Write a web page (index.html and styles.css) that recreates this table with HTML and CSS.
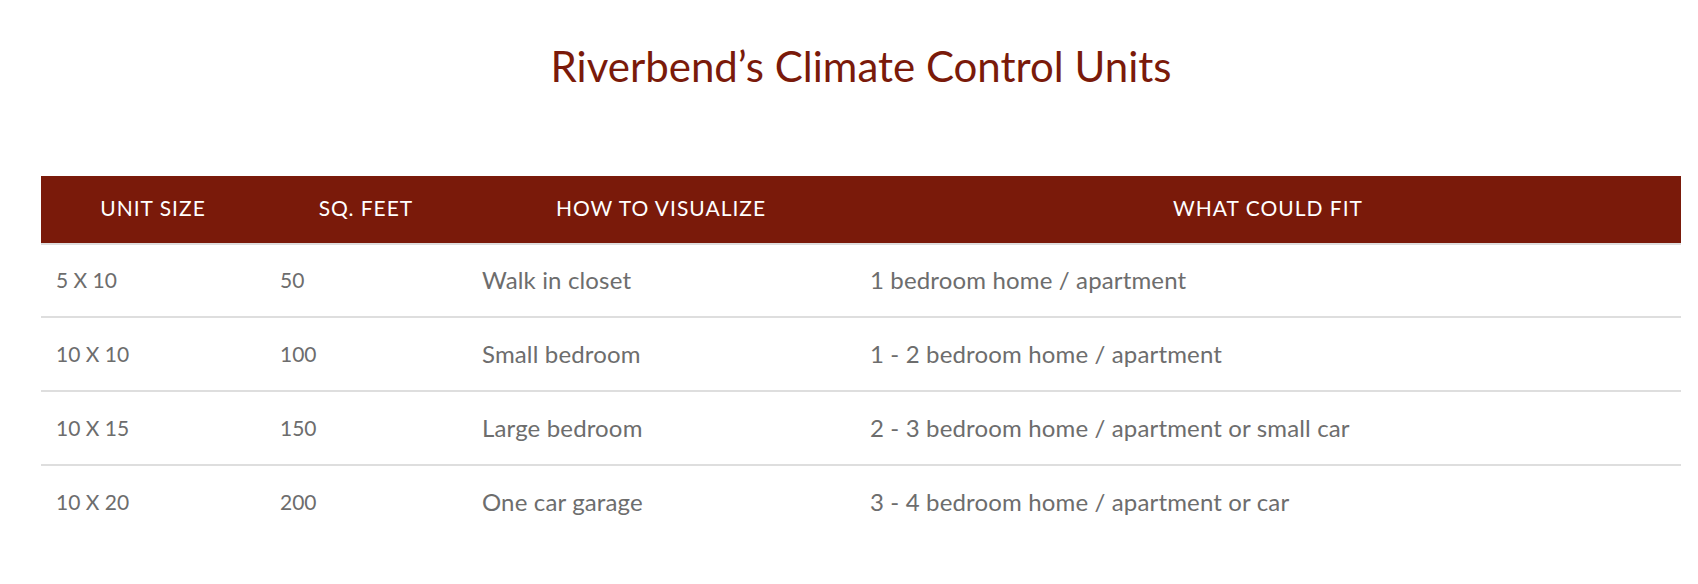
FILE: index.html
```html
<!DOCTYPE html>
<html lang="en">
<head>
<meta charset="utf-8">
<title>Riverbend's Climate Control Units</title>
<link rel="stylesheet" href="styles.css">
</head>
<body>
<div class="page">
  <h1 class="title">Riverbend’s Climate Control Units</h1>
  <table class="units">
    <colgroup>
      <col class="c1"><col class="c2"><col class="c3"><col class="c4">
    </colgroup>
    <thead>
      <tr>
        <th>UNIT SIZE</th>
        <th>SQ. FEET</th>
        <th>HOW TO VISUALIZE</th>
        <th>WHAT COULD FIT</th>
      </tr>
    </thead>
    <tbody>
      <tr>
        <td class="num">5 x 10</td>
        <td class="num">50</td>
        <td>Walk in closet</td>
        <td>1 bedroom home / apartment</td>
      </tr>
      <tr>
        <td class="num">10 x 10</td>
        <td class="num">100</td>
        <td>Small bedroom</td>
        <td>1 - 2 bedroom home / apartment</td>
      </tr>
      <tr>
        <td class="num">10 x 15</td>
        <td class="num">150</td>
        <td>Large bedroom</td>
        <td>2 - 3 bedroom home / apartment or small car</td>
      </tr>
      <tr>
        <td class="num">10 x 20</td>
        <td class="num">200</td>
        <td>One car garage</td>
        <td>3 - 4 bedroom home / apartment or car</td>
      </tr>
    </tbody>
  </table>
</div>
</body>
</html>
```

FILE: styles.css
```css
html, body {
  margin: 0;
  padding: 0;
  background: #ffffff;
}

.page {
  padding: 0 17px 0 41px;
  font-family: Lato, "Open Sans", sans-serif;
}

.title {
  margin: 0;
  padding-top: 42px;
  text-align: center;
  font-family: Lato, sans-serif;
  font-weight: 400;
  font-size: 42px;
  line-height: 48px;
  letter-spacing: 0;
  color: #7a1a0a;
}

.units {
  margin-top: 86px;
  width: 100%;
  border-collapse: separate;
  border-spacing: 0;
  table-layout: fixed;
}

.c1 { width: 224px; }
.c2 { width: 202px; }
.c3 { width: 388px; }
.c4 { width: auto; }

.units th {
  background: #7a1a0a;
  color: #ffffff;
  font-family: Lato, sans-serif;
  font-weight: 400;
  font-size: 21px;
  letter-spacing: 1px;
  line-height: 63px;
  padding: 0 0 4px 0;
  text-align: center;
  border-bottom: 2px solid #dedede;
}

.units td {
  font-family: Lato, sans-serif;
  font-size: 24px;
  letter-spacing: 0.15px;
  line-height: 36px;
  color: #6d6d6d;
  padding: 18px 15px;
  text-align: left;
  border-bottom: 2px solid #dedede;
  white-space: nowrap;
}

.units tbody tr:first-child td {
  padding-top: 17px;
}

.units td.num {
  font-size: 21px;
  letter-spacing: 0;
  text-transform: uppercase;
}

.units tbody tr:last-child td {
  border-bottom: none;
}
```
